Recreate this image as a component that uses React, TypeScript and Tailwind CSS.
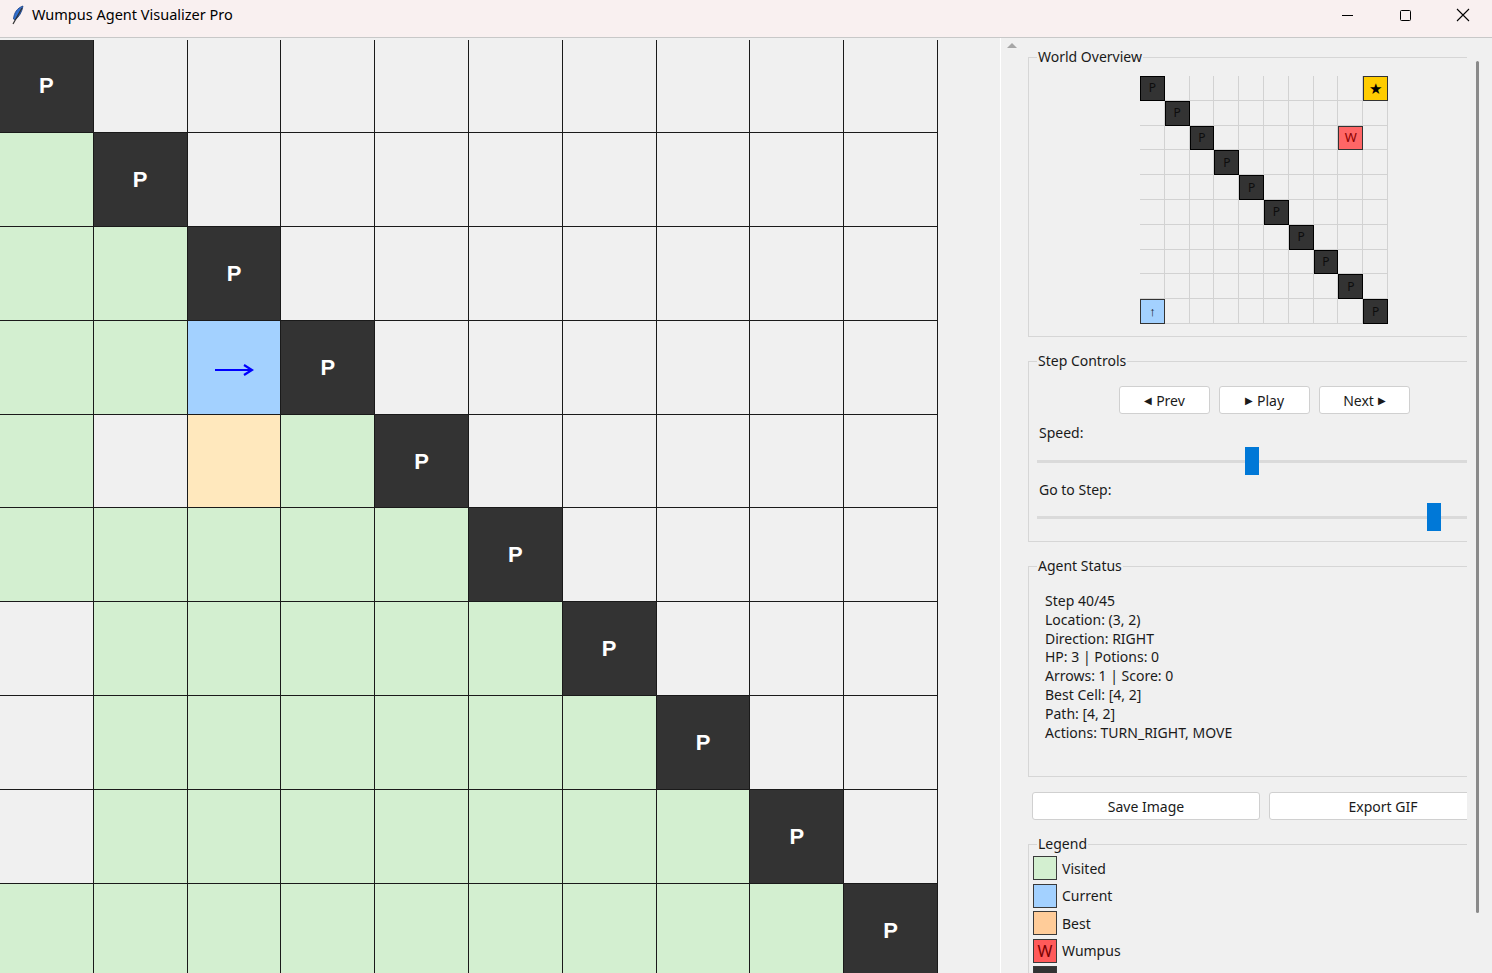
import React from "react";

type Cell = "P" | "L" | "G" | "C" | "B";

// main board, row by row from the top
const board: Cell[][] = [
  ["P", "L", "L", "L", "L", "L", "L", "L", "L", "L"],
  ["G", "P", "L", "L", "L", "L", "L", "L", "L", "L"],
  ["G", "G", "P", "L", "L", "L", "L", "L", "L", "L"],
  ["G", "G", "C", "P", "L", "L", "L", "L", "L", "L"],
  ["G", "L", "B", "G", "P", "L", "L", "L", "L", "L"],
  ["G", "G", "G", "G", "G", "P", "L", "L", "L", "L"],
  ["L", "G", "G", "G", "G", "G", "P", "L", "L", "L"],
  ["L", "G", "G", "G", "G", "G", "G", "P", "L", "L"],
  ["L", "G", "G", "G", "G", "G", "G", "G", "P", "L"],
  ["G", "G", "G", "G", "G", "G", "G", "G", "G", "P"],
];

const cellBg: Record<Cell, string> = {
  P: "bg-[#333333]",
  L: "bg-[#f0f0f0]",
  G: "bg-[#d3efd0]",
  C: "bg-[#a3d1ff]",
  B: "bg-[#ffe8bd]",
};

const font = { fontFamily: '"Noto Sans", "Open Sans", sans-serif' };

function Feather() {
  return (
    <svg width="14" height="20" viewBox="0 0 14 20">
      <path d="M12 1 C6 3 3 8 2.5 14 L4 15 C8 12 11 7 12 1 Z" fill="#2f6fd0" stroke="#1c3f80" strokeWidth="0.8" />
      <path d="M11 3 L2 19" stroke="#333" strokeWidth="1.2" />
    </svg>
  );
}

function TitleBar() {
  return (
    <div className="h-[38px] shrink-0 flex items-start bg-[#f9f0f0] border-b border-[#c8c8c8]">
      <div className="h-[30px] w-[32px] flex items-center justify-center pl-1">
        <Feather />
      </div>
      <span className="h-[30px] flex items-center text-[14.5px] text-black" style={{ fontFamily: '"Noto Sans", sans-serif' }}>
        Wumpus Agent Visualizer Pro
      </span>
      <div className="ml-auto flex h-[30px]">
        <div className="w-[58px] flex items-center justify-center">
          <div className="w-[11px] h-px bg-black" />
        </div>
        <div className="w-[58px] flex items-center justify-center">
          <div className="w-[11px] h-[11px] border border-black rounded-[1.5px]" />
        </div>
        <div className="w-[58px] flex items-center justify-center">
          <svg width="14" height="14" viewBox="0 0 14 14">
            <path d="M1 1 L13 13 M13 1 L1 13" stroke="#000" strokeWidth="1.1" />
          </svg>
        </div>
      </div>
    </div>
  );
}

function Board() {
  return (
    <div className="w-[1000px] h-full overflow-hidden bg-[#f0f0f0] pt-[1.5px]">
      <div className="grid grid-cols-[repeat(10,92.8px)] grid-rows-[repeat(10,92.8px)] gap-px bg-[#1a1a1a] w-[938px] border-r border-[#1a1a1a]">
        {board.map((row, r) =>
          row.map((c, i) => (
            <div key={`${r}-${i}`} className={`${cellBg[c]} flex items-center justify-center`}>
              {c === "P" && (
                <span className="text-white font-bold text-[22px]" style={{ fontFamily: '"Liberation Sans", Arial, sans-serif' }}>
                  P
                </span>
              )}
              {c === "C" && (
                <svg className="mt-[6px]" width="40" height="14" viewBox="0 0 40 14">
                  <path d="M1 7 H37 M30 2 L38 7 L30 12" stroke="#0000ff" strokeWidth="2.2" fill="none" />
                </svg>
              )}
            </div>
          ))
        )}
      </div>
    </div>
  );
}

function Frame({ title, className, children }: { title: string; className?: string; children: React.ReactNode }) {
  return (
    <div className={`relative border border-[#d6d6d6] ${className ?? ""}`}>
      <span className="absolute -top-[11px] left-[8px] px-px bg-[#f0f0f0] text-[14px] leading-[20px] text-[#1a1a1a]">
        {title}
      </span>
      {children}
    </div>
  );
}

function MiniMap() {
  const cells = [];
  for (let r = 0; r < 10; r++) {
    for (let c = 0; c < 10; c++) {
      let content: React.ReactNode = null;
      let cls = "border-r border-b border-[#d2d2d2]";
      if (r === c) {
        cls = "bg-[#333333] border border-black";
        content = <span className="text-[12px] text-[#0d0d0d]">P</span>;
      } else if (r === 0 && c === 9) {
        cls = "bg-[#ffcc00] border border-[#333]";
        content = <span className="text-[15px] text-black leading-none">★</span>;
      } else if (r === 2 && c === 8) {
        cls = "bg-[#ff6666] border border-[#333]";
        content = <span className="text-[13px] text-[#8b0000]">W</span>;
      } else if (r === 9 && c === 0) {
        cls = "bg-[#a3d1ff] border border-[#333]";
        content = <span className="text-[13px] text-[#111]">↑</span>;
      }
      cells.push(
        <div key={`${r}-${c}`} className={`${cls} flex items-center justify-center`}>
          {content}
        </div>
      );
    }
  }
  return <div className="grid grid-cols-[repeat(10,24.8px)] grid-rows-[repeat(10,24.8px)] w-[248px]">{cells}</div>;
}

function Slider({ pos }: { pos: number }) {
  return (
    <div className="relative h-[28px] ml-[8px] w-[440px]">
      <div className="absolute left-0 right-0 top-[13px] h-[3px] bg-[#dadada]" />
      <div className="absolute top-0 w-[14px] h-[28px] bg-[#0078d7]" style={{ left: pos }} />
    </div>
  );
}

function Btn({ children, className }: { children: React.ReactNode; className?: string }) {
  return (
    <div
      className={`shrink-0 h-[28px] bg-white border border-[#d0d0d0] rounded-[3px] flex items-center justify-center text-[14px] text-[#1a1a1a] ${className ?? ""}`}
    >
      {children}
    </div>
  );
}

const legend = [
  { label: "Visited", bg: "bg-[#d3efd0]", mark: "" },
  { label: "Current", bg: "bg-[#a3d1ff]", mark: "" },
  { label: "Best", bg: "bg-[#ffcc99]", mark: "" },
  { label: "Wumpus", bg: "bg-[#ff5a5a]", mark: "W" },
  { label: "Pit", bg: "bg-[#333333]", mark: "" },
];

function Panel() {
  return (
    <div className="flex-1 flex border-l border-white h-full">
      <div className="relative w-[466px] h-full overflow-hidden">
        <svg className="absolute left-[5px] top-[3px]" width="12" height="8" viewBox="0 0 12 8">
          <path d="M1 7 L6 2 L11 7 Z" fill="#a6a6a6" />
        </svg>
        <div className="w-[470px] pl-[27px] pt-[19px]" style={font}>
          <Frame title="World Overview" className="h-[280px] pt-[18px] pl-[111px]">
            <MiniMap />
          </Frame>

          <Frame title="Step Controls" className="mt-[24px] h-[181px]">
            <div className="flex gap-[9px] pl-[90px] pt-[24px]">
              <Btn className="w-[91px]">
                <span className="text-[10px] mr-[4px]">◀</span>Prev
              </Btn>
              <Btn className="w-[91px]">
                <span className="text-[10px] mr-[4px]">▶</span>Play
              </Btn>
              <Btn className="w-[91px]">
                Next<span className="text-[10px] ml-[4px]">▶</span>
              </Btn>
            </div>
            <div className="pl-[10px] mt-[9px] text-[14px] leading-[20px] text-[#1a1a1a]">Speed:</div>
            <div className="mt-[4px]">
              <Slider pos={208} />
            </div>
            <div className="pl-[10px] mt-[5px] text-[14px] leading-[20px] text-[#1a1a1a]">Go to Step:</div>
            <div className="mt-[3px]">
              <Slider pos={390} />
            </div>
          </Frame>

          <Frame title="Agent Status" className="mt-[24px] h-[211px]">
            <div className="pl-[16px] pt-[25px] text-[14px] leading-[18.8px] text-[#1a1a1a]">
              <div>Step 40/45</div>
              <div>Location: (3, 2)</div>
              <div>Direction: RIGHT</div>
              <div>HP: 3 | Potions: 0</div>
              <div>Arrows: 1 | Score: 0</div>
              <div>Best Cell: [4, 2]</div>
              <div>Path: [4, 2]</div>
              <div>Actions: TURN_RIGHT, MOVE</div>
            </div>
          </Frame>

          <div className="flex gap-[9px] mt-[15px] pl-[4px]">
            <Btn className="w-[228px]">Save Image</Btn>
            <Btn className="w-[228px]">Export GIF</Btn>
          </div>

          <Frame title="Legend" className="mt-[24px] h-[160px] border-r-0 border-b-0">
            <div className="pt-[11px] pl-[4px] flex flex-col gap-[3.5px]">
              {legend.map((l) => (
                <div key={l.label} className="flex items-center gap-[5px]">
                  <div className={`w-[24px] h-[24px] ${l.bg} border border-[#3a3a3a] flex items-center justify-center text-[16px] text-[#7a0000] leading-none`}>
                    {l.mark}
                  </div>
                  <span className="text-[14px] text-[#1a1a1a]">{l.label}</span>
                </div>
              ))}
            </div>
          </Frame>
        </div>
      </div>
      <div className="flex-1 relative">
        <div className="absolute left-[9px] top-[23px] w-[3px] h-[852px] bg-[#8a8a8a] rounded-full" />
      </div>
    </div>
  );
}

export default function App() {
  return (
    <div className="w-[1492px] h-[973px] overflow-hidden flex flex-col bg-[#f0f0f0]">
      <TitleBar />
      <div className="flex flex-1 min-h-0">
        <Board />
        <Panel />
      </div>
    </div>
  );
}
